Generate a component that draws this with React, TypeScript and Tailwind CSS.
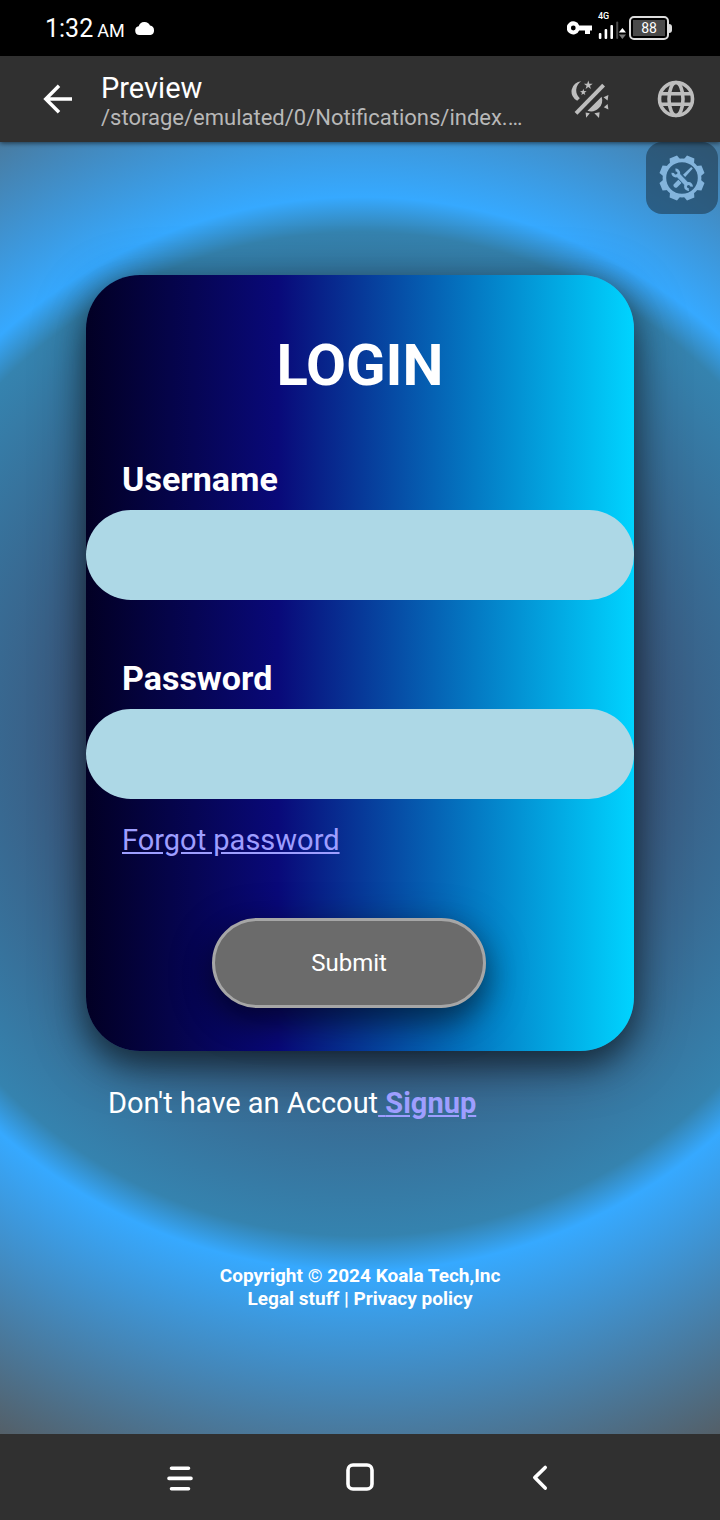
import React from "react";

const GEAR_TEETH = [0, 45, 90, 135, 180, 225, 270, 315];

function CloudIcon() {
  return (
    <svg width="22" height="16" viewBox="0 0 22 16" fill="#fff" aria-hidden="true">
      <path d="M5.4 15A4.4 4.4 0 0 1 4.7 6.3 6 6 0 0 1 16 5.6 4.8 4.8 0 0 1 16.4 15z" />
    </svg>
  );
}

function KeyIcon() {
  return (
    <svg width="26" height="14" viewBox="0 0 26 14" fill="#fff" aria-hidden="true">
      <path
        fillRule="evenodd"
        d="M12.2 4.4H25v5h-2V13h-5V9.4h-5.8A6.5 6.5 0 1 1 12.2 4.4zM6.3 4.6a2.4 2.4 0 1 0 0 4.8 2.4 2.4 0 0 0 0-4.8z"
      />
    </svg>
  );
}

function SignalIcon() {
  return (
    <svg width="28" height="19" viewBox="0 0 28 19" aria-hidden="true">
      <g fill="#fff">
        <rect x="0.8" y="12" width="2.6" height="6" rx="1" />
        <rect x="6.6" y="8" width="2.6" height="10" rx="1" />
        <rect x="12.4" y="4" width="2.6" height="14" rx="1" />
        <path d="M20.8 11.5 24.4 7l3.6 4.5z" />
      </g>
      <rect x="18.2" y="0.5" width="2" height="17.5" rx="1" fill="#4a4a4a" />
      <path d="M20.8 13.5h7.2L24.4 18z" fill="#7a7a7a" />
    </svg>
  );
}

function NightModeIcon() {
  return (
    <svg width="38" height="38" viewBox="0 0 38 38" fill="#bdbdbd" aria-hidden="true">
      <path d="M10.3 1.3A10.3 10.3 0 0 0 6.2 20.8L8.8 18.3A10.6 10.6 0 0 1 10.3 1.3z" />
      <path d="m17.3.6 1 3.1 3.4.1-2.7 2 .9 3.2-2.600-1.900-2.700 1.900 1-3.200-2.700-2 3.300-.1z" />
      <path d="m12.300 8.700.8 2.400 2.500.1-2 1.500.7 2.400-2-1.400-2 1.400.7-2.400-2-1.500 2.500-.1z" />
      <path d="M31.2 3.8 34 6.500 6.400 34.700 3.600 32z" />
      <path d="M30.600 16.700A11.200 11.200 0 0 1 16.500 30.800z" />
      <path d="M32.500 17.200 37.400 15l-.8 5.400zM32.800 27.200l3.800-3.200.8 5.400zM23.400 33.200l5.200-1-.6 5.800zM14.600 32.400l4.200.8-3.600 4.600z" />
    </svg>
  );
}

function GlobeIcon() {
  return (
    <svg width="38" height="38" viewBox="0 0 38 38" fill="none" stroke="#bdbdbd" strokeWidth="3.6" aria-hidden="true">
      <circle cx="19" cy="19" r="16.5" />
      <ellipse cx="19" cy="19" rx="7" ry="16.5" />
      <path d="M3.5 13.7h31M3.5 24.3h31" />
    </svg>
  );
}

function ToolsIcon() {
  return (
    <svg width="48" height="48" viewBox="0 0 48 48" aria-hidden="true">
      <g fill="#83b4dc">
        {GEAR_TEETH.map((angle) => (
          <path
            key={angle}
            d="M18.3 6.5 20 1.3h8l1.7 5.2z"
            transform={`rotate(${angle + 22.5} 24 24)`}
          />
        ))}
        <path
          fillRule="evenodd"
          d="M24 4.6a19.4 19.4 0 1 1 0 38.8 19.4 19.4 0 0 1 0-38.800zm0 3.600a15.800 15.800 0 1 0 0 31.600 15.800 15.800 0 0 0 0-31.600z"
        />
        <path d="m33.2 13 1.600 1.600-7.600 8.400-2.200-2.200zM20.500 25.500l3.200 3.200-4.700 4.800c-1.700 1.300-4.700-1.700-3.200-3.300z" />
      </g>
      <path d="m19.5 20.5 10 10.5" stroke="#33678f" strokeWidth="6" />
      <g fill="none" stroke="#83b4dc">
        <path d="m19.5 20.5 10 10.500" strokeWidth="4.2" />
        <path d="M17.500 16a3 3 0 1 1-2.700 2.800M30.800 35.500a3 3 0 1 1 2.700-2.800" strokeWidth="2.8" />
      </g>
    </svg>
  );
}

function StatusBar() {
  return (
    <div className="flex h-14 items-center justify-between bg-black pr-12 pl-[45px] text-white">
      <div className="flex items-center">
        <div className="flex items-baseline gap-1 pt-1">
          <span className="text-[25px] leading-8">1:32</span>
          <span className="text-lg leading-8">AM</span>
        </div>
        <span className="ml-[9px]">
          <CloudIcon />
        </span>
      </div>
      <div className="flex items-center">
        <KeyIcon />
        <div className="ml-[5px] flex flex-col pb-1">
          <span className="text-[9px] leading-[9px] font-medium">4G</span>
          <SignalIcon />
        </div>
        <div className="ml-[3px] flex items-center">
          <div className="flex h-6 w-10 rounded-[5px] border-2 border-[#dcdcdc] p-[2px]">
            <span className="flex flex-1 items-center justify-center bg-[#4a4a4a] text-sm">
              88
            </span>
          </div>
          <div className="h-[9px] w-[3px] rounded-r-sm bg-[#dcdcdc]" />
        </div>
      </div>
    </div>
  );
}

function AppBar() {
  return (
    <header className="relative z-10 flex h-[86px] items-center bg-[#303030] pr-[25px] pl-[42px] shadow-[0_1px_5px_rgba(0,0,0,0.6)]">
      <button type="button" aria-label="Back">
        <svg width="30" height="30" viewBox="0 0 30 30" fill="none" stroke="#fff" strokeWidth="3.5" aria-hidden="true">
          <path d="M30 15H4M17 1.8 3.8 15 17 28.2" />
        </svg>
      </button>
      <div className="ml-[29px] min-w-0 flex-1 pt-1">
        <h1 className="text-[29px] leading-8 text-white">Preview</h1>
        <p className="truncate text-[22px] leading-[27px] text-[#b8b8b8]">
          /storage/emulated/0/Notifications/index.…
        </p>
      </div>
      <div className="flex shrink-0 gap-12">
        <button type="button" aria-label="Toggle night mode">
          <NightModeIcon />
        </button>
        <button type="button" aria-label="Open in browser">
          <GlobeIcon />
        </button>
      </div>
    </header>
  );
}

function Field({ id, label, type }: { id: string; label: string; type: string }) {
  return (
    <div className="pt-[58px]">
      <label htmlFor={id} className="ml-9 block text-[34px] leading-10 font-bold">
        {label}
      </label>
      <input
        id={id}
        type={type}
        className="mt-[11px] block h-[90px] w-full rounded-full bg-[#add8e6] px-9 text-[29px] text-black outline-none"
      />
    </div>
  );
}

function NavBar() {
  return (
    <nav className="flex h-[86px] items-center justify-center gap-[150px] bg-[#303030]">
      <button type="button" aria-label="Recent apps">
        <svg width="30" height="30" viewBox="0 0 30 30" stroke="#fff" strokeWidth="3.6" strokeLinecap="round" aria-hidden="true">
          <path d="M6.5 6.3h17M4 16.4h22M6.5 26.7h17" />
        </svg>
      </button>
      <button type="button" aria-label="Home">
        <svg width="30" height="30" viewBox="0 0 30 30" fill="none" stroke="#fff" strokeWidth="3.6" aria-hidden="true">
          <rect x="3" y="3" width="24" height="24" rx="5" />
        </svg>
      </button>
      <button type="button" aria-label="Go back">
        <svg width="30" height="30" viewBox="0 0 30 30" fill="none" stroke="#fff" strokeWidth="3.6" strokeLinecap="round" strokeLinejoin="round" aria-hidden="true">
          <path d="M20.2 5.5 9.8 15.6l10.4 10.5" />
        </svg>
      </button>
    </nav>
  );
}

export default function App() {
  return (
    <div className="flex min-h-screen flex-col font-[Roboto,'Liberation_Sans',sans-serif]">
      <StatusBar />
      <AppBar />
      <main className="relative flex-1 bg-[radial-gradient(circle_at_50%_592px,#3a3a5c_0px,#3a5a80_290px,#3583af_502px,#36a9ff_537px,#575757_815px)] px-[86px] pt-[133px] text-white">
        <button
          type="button"
          aria-label="Developer tools"
          className="absolute top-0 right-[2px] flex size-[72px] items-center justify-center rounded-2xl bg-[#1e3a50]/60"
        >
          <ToolsIcon />
        </button>
        <form
          onSubmit={(event) => event.preventDefault()}
          className="rounded-[54px] bg-[linear-gradient(90deg,#020024_0%,#090979_35%,#00d4ff_100%)] pt-14 pb-[43px] shadow-[0_14px_29px_rgba(0,0,0,0.4),0_11px_54px_rgba(0,0,0,0.4)]"
        >
          <h2 className="pb-[2px] text-center text-[58px] leading-[68px] font-bold">LOGIN</h2>
          <Field id="username" label="Username" type="text" />
          <Field id="password" label="Password" type="password" />
          <a href="#forgot" className="mt-6 ml-9 block w-fit text-[29px] leading-[34px] text-[#9e9eff] underline">
            Forgot password
          </a>
          <button
            type="submit"
            className="mt-[61px] ml-[23%] block h-[90px] w-1/2 rounded-full border-[3px] border-[#a6a6a6] bg-[#6b6b6b] text-2xl shadow-[0_14px_29px_rgba(0,0,0,0.35),0_11px_43px_rgba(0,0,0,0.35)]"
          >
            Submit
          </button>
        </form>
        <p className="mt-[35px] ml-[22px] text-[29px] leading-[34px]">
          Don't have an Accout
          <a href="#signup" className="font-bold text-[#9e9eff] underline">
            {" "}
            Signup
          </a>
        </p>
        <footer className="mt-36 pb-10 text-center text-[19px] leading-[23px] font-bold">
          <p>Copyright © 2024 Koala Tech,Inc</p>
          <p>Legal stuff | Privacy policy</p>
        </footer>
      </main>
      <NavBar />
    </div>
  );
}
